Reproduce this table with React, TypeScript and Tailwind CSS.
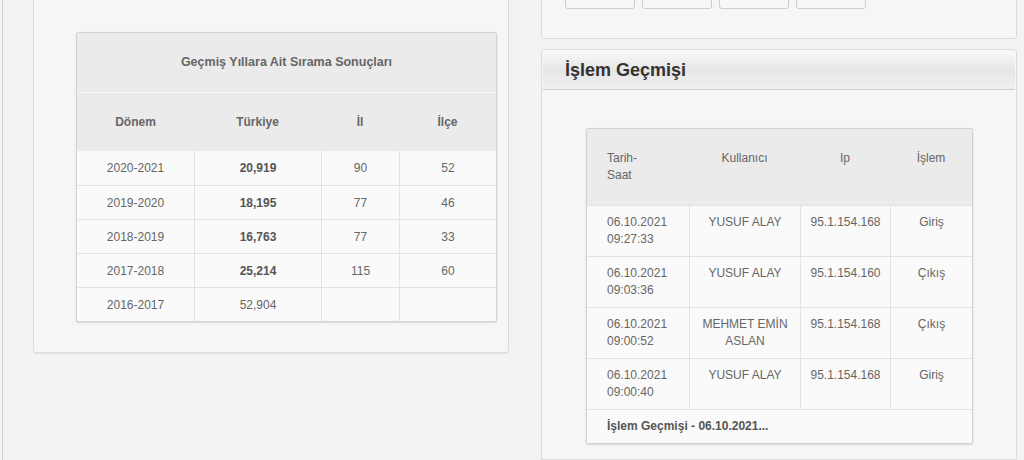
import React from "react";

const leftRows = [
  { d: "2020-2021", t: "20,919", i: "90", c: "52", b: true },
  { d: "2019-2020", t: "18,195", i: "77", c: "46", b: true },
  { d: "2018-2019", t: "16,763", i: "77", c: "33", b: true },
  { d: "2017-2018", t: "25,214", i: "115", c: "60", b: true },
  { d: "2016-2017", t: "52,904", i: "", c: "", b: false },
];

const rightRows = [
  { d: "06.10.2021", h: "09:27:33", u: ["YUSUF ALAY"], ip: "95.1.154.168", op: "Giriş" },
  { d: "06.10.2021", h: "09:03:36", u: ["YUSUF ALAY"], ip: "95.1.154.160", op: "Çıkış" },
  { d: "06.10.2021", h: "09:00:52", u: ["MEHMET EMİN", "ASLAN"], ip: "95.1.154.168", op: "Çıkış" },
  { d: "06.10.2021", h: "09:00:40", u: ["YUSUF ALAY"], ip: "95.1.154.168", op: "Giriş" },
];

export default function App() {
  return (
    <div
      className="w-[1024px] h-[460px] overflow-hidden bg-[#f3f3f3] flex text-[12px] text-[#666]"
      style={{ fontFamily: '"Liberation Sans", Arial, sans-serif' }}
    >
      {/* left column */}
      <div className="w-[520px] shrink-0 h-full border-l border-[#cfcfcf] ml-[2px] pl-[30px]">
        <div className="w-[476px] mt-[-20px] h-[373px] bg-[#f6f6f6] border border-[#dcdcdc] rounded-[3px] shadow-[0_1px_1px_rgba(0,0,0,0.06)] pt-[51px] pl-[42px]">
          <div className="w-[421px] bg-[#fafafa] border border-[#d2d2d2] rounded-[2px] shadow-[0_1px_2px_rgba(0,0,0,0.12)]">
            <div className="h-[60px] bg-[#ebebeb] flex items-center justify-center font-bold text-[12.5px] text-[#666] border-b border-[#f7f7f7]">
              Geçmiş Yıllara Ait Sırama Sonuçları
            </div>
            <div className="h-[58px] bg-[#ebebeb] flex items-center font-bold text-[#666]">
              <div className="w-[117px] text-center">Dönem</div>
              <div className="w-[127px] text-center">Türkiye</div>
              <div className="w-[78px] text-center">İl</div>
              <div className="flex-1 text-center">İlçe</div>
            </div>
            {leftRows.map((r, idx) => (
              <div
                key={r.d}
                className={`flex h-[34px] items-stretch text-[#666] ${idx > 0 ? "border-t border-[#e2e2e2]" : ""}`}
              >
                <div className="w-[117px] flex items-center justify-center">{r.d}</div>
                <div className={`w-[127px] flex items-center justify-center border-l border-[#e2e2e2] ${r.b ? "font-bold text-[#555]" : ""}`}>{r.t}</div>
                <div className="w-[78px] flex items-center justify-center border-l border-[#e2e2e2]">{r.i}</div>
                <div className="flex-1 flex items-center justify-center border-l border-[#e2e2e2]">{r.c}</div>
              </div>
            ))}
          </div>
        </div>
      </div>

      {/* right column */}
      <div className="w-[502px] shrink-0 h-full pl-[19px] flex flex-col">
        <div className="w-[476px] mt-[-30px] h-[69px] bg-[#f6f6f6] border border-[#dcdcdc] rounded-[3px] pl-[23px] flex gap-[7px] items-end pb-[29px]">
          {[0, 1, 2, 3].map((i) => (
            <div key={i} className="w-[70px] h-[20px] bg-[#f7f7f7] border border-[#cdcdcd] rounded-[3px]" />
          ))}
        </div>
        <div className="w-[476px] mt-[10px] flex-1 bg-[#f6f6f6] border border-[#dcdcdc] rounded-t-[3px] flex flex-col">
          <div className="h-[39px] mx-[1px] mt-[1px] border-b border-[#cfcfcf] bg-gradient-to-b from-[#f9f9f9] via-[#e6e6e6] to-[#f0f0f0] flex items-center pl-[22px] rounded-t-[3px]">
            <span className="text-[18px] font-bold text-[#333]">İşlem Geçmişi</span>
          </div>
          <div className="pt-[38px] pl-[44px]">
            <div className="w-[387px] bg-[#fafafa] border border-[#d2d2d2] rounded-[2px] shadow-[0_1px_2px_rgba(0,0,0,0.12)] leading-[17px]">
              <div className="h-[76px] bg-[#ebebeb] flex pt-[21px] text-[#666]">
                <div className="w-[102px] pl-[20px]">Tarih-<br />Saat</div>
                <div className="w-[111px] text-center">Kullanıcı</div>
                <div className="w-[90px] text-center">Ip</div>
                <div className="flex-1 text-center">İşlem</div>
              </div>
              {rightRows.map((r, idx) => (
                <div key={idx} className="flex h-[51px] border-t border-[#e2e2e2] text-[#666]">
                  <div className="w-[102px] pl-[20px] pt-[8px]">{r.d}<br />{r.h}</div>
                  <div className="w-[111px] text-center pt-[8px] border-l border-[#e2e2e2]">
                    {r.u.map((l, j) => (
                      <div key={j}>{l}</div>
                    ))}
                  </div>
                  <div className="w-[90px] text-center pt-[8px] border-l border-[#e2e2e2]">{r.ip}</div>
                  <div className="flex-1 text-center pt-[8px] border-l border-[#e2e2e2]">{r.op}</div>
                </div>
              ))}
              <div className="h-[34px] border-t border-[#e2e2e2] flex items-center pl-[20px] font-bold text-[#555]">
                İşlem Geçmişi - 06.10.2021...
              </div>
            </div>
          </div>
        </div>
      </div>
    </div>
  );
}
